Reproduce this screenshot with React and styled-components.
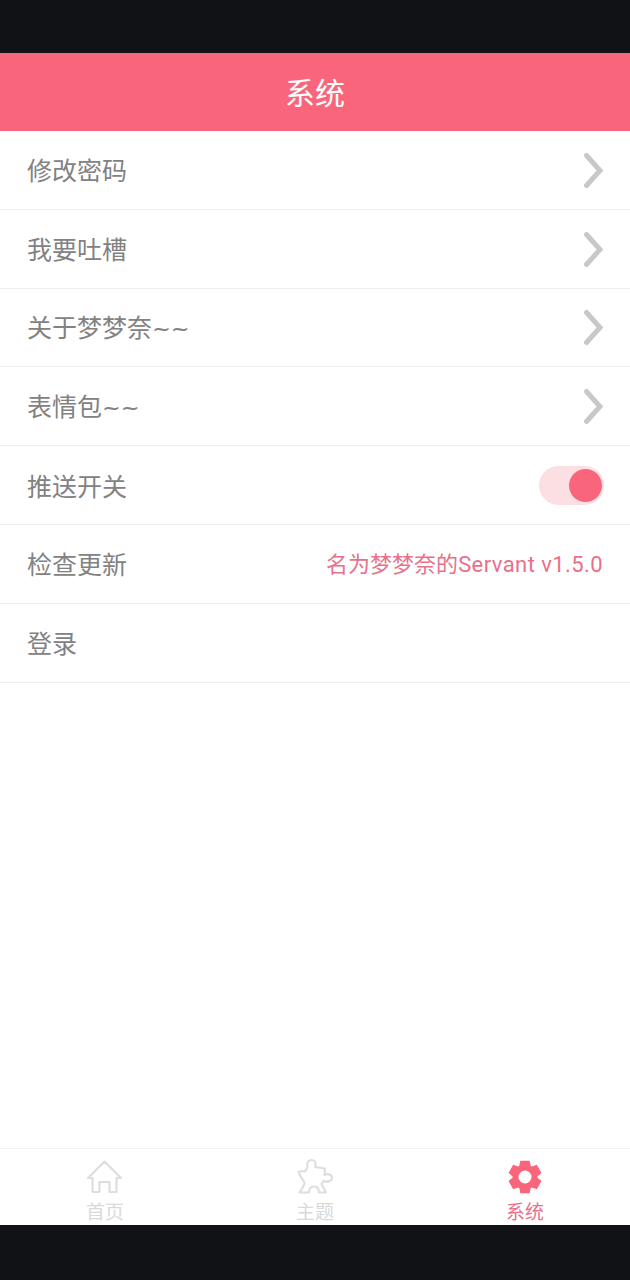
import React from "react";
import styled, { createGlobalStyle } from "styled-components";

const PINK = "#f9667c";

const Global = createGlobalStyle`
  html, body {
    margin: 0;
    padding: 0;
    background: #fff;
  }
  * {
    box-sizing: border-box;
  }
`;

const Screen = styled.div`
  width: 630px;
  height: 1280px;
  display: flex;
  flex-direction: column;
  background: #fff;
  font-family: "Noto Sans CJK SC", "Roboto", sans-serif;
`;

const BlackBar = styled.div`
  flex: none;
  height: ${(p) => p.$h}px;
  background: #111216;
`;

const Header = styled.div`
  flex: none;
  height: 78px;
  padding-bottom: 2px;
  display: flex;
  align-items: center;
  justify-content: center;
  background: ${PINK};
  color: #fff;
  font-size: 30px;
  line-height: 1;
`;

const List = styled.div`
  flex: 1;
  min-height: 0;
`;

const Row = styled.div`
  height: 78.8px;
  display: flex;
  align-items: center;
  justify-content: space-between;
  padding: 0 27px;
  border-bottom: 1px solid #eeeeee;
  color: #828282;
  font-size: 25px;
  line-height: 1;
`;

const Tilde = styled.span`
  font-family: "DejaVu Sans", sans-serif;
  font-size: 22.5px;
`;

const Version = styled.span`
  font-size: 22px;
  color: #e9708a;
`;

const Latin = styled.span`
  font-family: "Roboto", sans-serif;
  letter-spacing: 0.42px;
`;

const ArrowBox = styled.svg`
  width: 22px;
  height: 38px;
  margin-right: -1px;
  fill: none;
  stroke: #c8c8c8;
  stroke-width: 5;
  stroke-linecap: round;
  stroke-linejoin: miter;
`;

const Track = styled.div`
  width: 65px;
  height: 39px;
  margin-right: -1px;
  padding: 3px 2px;
  display: flex;
  justify-content: flex-end;
  border-radius: 20px;
  background: #fbdfe3;
`;

const Knob = styled.div`
  width: 33px;
  height: 33px;
  border-radius: 50%;
  background: ${PINK};
`;

const TabBar = styled.div`
  flex: none;
  height: 77px;
  display: flex;
  border-top: 1px solid #f2f2f2;
`;

const Tab = styled.div`
  flex: 1;
  display: flex;
  flex-direction: column;
  align-items: center;
  padding-top: 8px;
  color: ${(p) => (p.$active ? "#e9708a" : "#d9d9d9")};
  font-size: 19px;
  line-height: 24px;
`;

const TabIcon = styled.svg`
  display: block;
  width: 40px;
  height: 40px;
  margin-bottom: 2px;
`;

const OutlineIcon = styled(TabIcon)`
  fill: none;
  stroke: #dedede;
  stroke-width: 2.2;
  stroke-linejoin: round;
`;

const Arrow = () => (
  <ArrowBox viewBox="0 0 22 38">
    <path d="M4.5 4.5 L18 19.5 L4.5 34.5" />
  </ArrowBox>
);

const HomeIcon = () => (
  <OutlineIcon viewBox="0 0 40 40">
    <path d="M19.5 4.5 L36 21 L31.5 21 L31.5 35 L24.5 35 L24.5 25 L14.5 25 L14.5 35 L7.5 35 L7.5 21 L3 21 Z" />
  </OutlineIcon>
);

const PuzzleIcon = () => (
  <OutlineIcon viewBox="0 0 40 40">
    <path d="M12.5 10.5 C11.5 6 13 3 16.5 3 C20 3 21.5 6 20 10 L30 11.5 L29.5 18 C32 16.5 36.5 17 37 20.5 C37.5 24 32 25.5 28.5 24 L26.5 27 L31 35.5 L24 35.5 C24 31 22 29.5 19 29.5 C16 29.5 14 31 14 35.5 L4.5 35.5 C7 32 9.5 28 9.5 26 C9.5 24 5 20 3.5 15 C6 13.5 8 14 10 14.5 Z" />
  </OutlineIcon>
);

// six teeth, one pointing straight up
const gearPath = () => {
  const pt = (deg, r) => {
    const a = (deg * Math.PI) / 180;
    return `${(20 + r * Math.cos(a)).toFixed(2)} ${(20 + r * Math.sin(a)).toFixed(2)}`;
  };
  let d = "";
  for (let i = 0; i < 6; i++) {
    const c = -90 + i * 60;
    const seg = [pt(c - 27, 12.5), pt(c - 16, 17), pt(c + 16, 17), pt(c + 27, 12.5)];
    d += (i === 0 ? "M" : "L") + seg.join(" L");
  }
  return `${d} Z M20 13.5 A6.5 6.5 0 1 0 20 26.5 A6.5 6.5 0 1 0 20 13.5 Z`;
};

const GearIcon = () => (
  <TabIcon viewBox="0 0 40 40">
    <path fill={PINK} fillRule="evenodd" d={gearPath()} />
  </TabIcon>
);

const links = [
  { text: "修改密码" },
  { text: "我要吐槽" },
  { text: "关于梦梦奈", tilde: true },
  { text: "表情包", tilde: true },
];

export default function App() {
  return (
    <Screen>
      <Global />
      <BlackBar $h={53} />
      <Header>系统</Header>
      <List>
        {links.map((l) => (
          <Row key={l.text}>
            <span>
              {l.text}
              {l.tilde && <Tilde>~~</Tilde>}
            </span>
            <Arrow />
          </Row>
        ))}
        <Row>
          <span>推送开关</span>
          <Track>
            <Knob />
          </Track>
        </Row>
        <Row>
          <span>检查更新</span>
          <Version>
            名为梦梦奈的<Latin>Servant v1.5.0</Latin>
          </Version>
        </Row>
        <Row>
          <span>登录</span>
        </Row>
      </List>
      <TabBar>
        <Tab>
          <HomeIcon />
          首页
        </Tab>
        <Tab>
          <PuzzleIcon />
          主题
        </Tab>
        <Tab $active>
          <GearIcon />
          系统
        </Tab>
      </TabBar>
      <BlackBar $h={55} />
    </Screen>
  );
}
